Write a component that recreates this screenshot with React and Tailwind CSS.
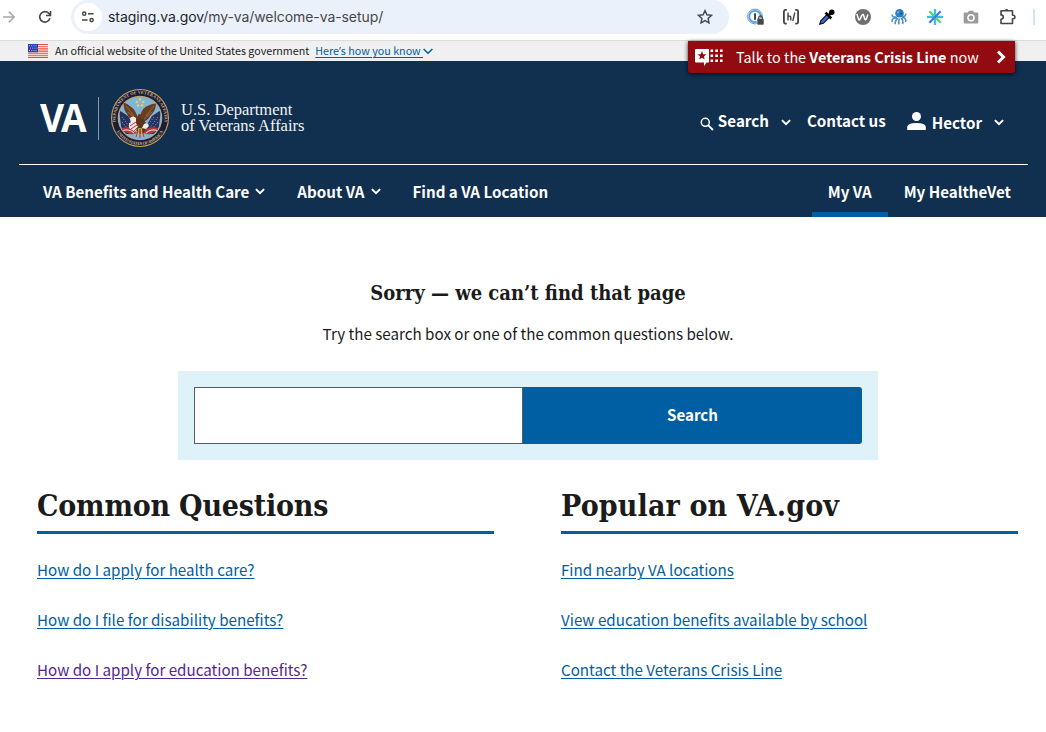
import React from "react";

const SANS = "font-['Noto_Sans_CJK_SC',sans-serif]";
const SLAB = "font-['DejaVu_Serif_Condensed','DejaVu_Serif',serif]";

function Chevron({ className = "" }) {
  return (
    <svg viewBox="0 0 10 7" fill="none" stroke="currentColor" strokeWidth="2" className={`h-[7px] w-[10px] shrink-0 ${className}`}>
      <path d="M0.9 1.1 5 5.1 9.1 1.1" />
    </svg>
  );
}

function Apostrophe() {
  return <span className="font-['Open_Sans',sans-serif] leading-none">’</span>;
}

function BrowserBar() {
  return (
    <div className="flex h-[41px] items-start border-b border-[#dcdcdc] bg-white">
      <svg viewBox="0 0 16 34" className="h-[34px] w-4 shrink-0" fill="none" stroke="#a8a8a8" strokeWidth="1.5">
        <path d="M3 17h11M8.8 11.6l5.4 5.4-5.4 5.4" />
      </svg>
      <svg viewBox="0 0 14 14" className="ml-[22px] mt-[10px] h-[14px] w-[14px] shrink-0" fill="none" stroke="#474747" strokeWidth="1.6">
        <path d="M11.9 8.3A5.2 5.2 0 1 1 10.8 3.4L12.6 5.2" />
        <path d="M12.5 1v4.5H8" />
      </svg>
      <div className="ml-[19px] flex h-[34px] w-[658px] shrink-0 items-center rounded-full bg-[#eaf1fb] pl-[3px] pr-4">
        <span className="flex h-7 w-7 items-center justify-center rounded-full bg-white">
          <svg viewBox="0 0 14 12" className="h-3 w-[14px]" fill="none" stroke="#474747" strokeWidth="1.5">
            <circle cx="3.2" cy="2.7" r="1.6" />
            <path d="M7 2.7h5.6M1 9.1h5.6" />
            <circle cx="10.6" cy="9.1" r="1.6" />
          </svg>
        </span>
        <span className="ml-[6px] whitespace-nowrap font-['Inter',sans-serif] text-[14px] leading-5 tracking-[-0.075px] text-[#474747]">
          <span className="text-[#1f1f1f]">staging.va.gov</span>/my-va/welcome-va-setup/
        </span>
        <svg viewBox="0 0 16 16" className="ml-auto h-4 w-4" fill="none" stroke="#474747" strokeWidth="1.4">
          <path d="M8 1.6l1.9 4.2 4.6.5-3.4 3.1.9 4.5L8 11.6l-4 2.3.9-4.5L1.5 6.3l4.6-.5z" />
        </svg>
      </div>
      <div className="flex h-[34px] flex-1 items-center pl-[18px]">
        <svg viewBox="0 0 18 18" className="h-[18px] w-[18px]" fill="none">
          <circle cx="8" cy="8.5" r="7.4" stroke="#8a8f96" strokeWidth="1" />
          <circle cx="8" cy="8.5" r="5.7" stroke="#3aa0f5" strokeWidth="1.7" fill="#fff" />
          <path d="M8 5.3v6.4" stroke="#333" strokeWidth="1.8" />
          <rect x="10" y="10.5" width="7" height="6.5" rx="1" fill="#474747" stroke="#fff" strokeWidth=".6" />
          <path d="M11.7 11V9.7a1.8 1.8 0 0 1 3.6 0V11" stroke="#474747" strokeWidth="1.2" />
        </svg>
        <svg viewBox="0 0 18 18" className="ml-[17px] h-[18px] w-[18px]" fill="none" stroke="#444" strokeWidth="1.8">
          <path d="M4.800 1.900H3.500Q1.900 1.900 1.900 4v9.500q0 2.100 1.600 2.100h1.300M13.200 1.900h1.300q1.600 0 1.600 2.100v9.500q0 2.100-1.600 2.100h-1.300" />
          <path d="M6 4.500v8M6 8.700q2.800-1.600 2.800 1v2.800M12.800 4.500l-2 8.500" strokeWidth="1.4" />
        </svg>
        <svg viewBox="0 0 16 16" className="ml-[19px] h-4 w-4">
          <path d="M.8 15.2l1-3.400 6.600-6.600 2.500 2.500-6.600 6.600z" fill="#3d6be0" stroke="#111" strokeWidth="1.200" />
          <path d="M6.5 3.600l5.900 5.900M8.800 7.200l4.200-4.200" stroke="#000" strokeWidth="2.600" />
          <circle cx="12.800" cy="3.200" r="2.700" fill="#000" />
        </svg>
        <svg viewBox="0 0 18 18" className="ml-[19px] h-[18px] w-[18px]" fill="none">
          <circle cx="9" cy="9" r="8" fill="#6f6f6f" />
          <path d="M2.800 6l1.800 5.300q.6 1.200 1.300 0L8 7.200q1-1.400 1.600 0l1.200 4q.7 1.300 1.400 0l1.700-4.800" stroke="#fff" strokeWidth="1.500" />
        </svg>
        <svg viewBox="0 0 18 18" className="ml-[18px] h-[18px] w-[18px]" fill="none" stroke="#4b93c6" strokeWidth="1.600">
          <path d="M6.500 9Q2 9.500 2 6.500M7 10q-5.500-.5-5 4M8 10.500q-3 1.500-2.800 5.800M9.500 10.500q-1.500 3-.5 6M11 10q2.500 2 1.700 6M12 9.500q4.300 0 3.800 4.500M12 8.500q3.800.5 3.800-3" />
          <circle cx="9.500" cy="5.300" r="4.300" fill="#2b7fc4" stroke="none" />
          <circle cx="8" cy="4.300" r="1" fill="#6fc0ea" stroke="none" />
          <circle cx="11.300" cy="5.500" r=".9" fill="#0f3d70" stroke="none" />
        </svg>
        <svg viewBox="0 0 18 18" className="ml-[18px] h-[18px] w-[18px]" fill="none" strokeWidth="2.300">
          <path d="M9 1v16" stroke="#31c8e8" />
          <path d="M1 9h16" stroke="#26c6dc" />
          <path d="M3.300 3.300l11.400 11.400" stroke="#4be05c" />
          <path d="M14.700 3.300L3.300 14.700" stroke="#4a74f5" />
        </svg>
        <svg viewBox="0 0 16 16" className="ml-[19px] h-4 w-4" fill="#9b9b9b">
          <path d="M1.700 3.500H4.800L6 1.700h4l1.200 1.800h3.100q1 0 1 1V13.500q0 1-1 1H1.700q-1 0-1-1V4.500q0-1 1-1z" />
          <circle cx="8" cy="8.800" r="3.800" fill="#fff" />
          <circle cx="8" cy="8.800" r="2.200" />
        </svg>
        <svg viewBox="0 0 18 18" className="ml-5 h-[18px] w-[18px]" fill="none" stroke="#474747" strokeWidth="1.600">
          <path d="M2 2.800h11.500v4.500h.7a1.700 1.700 0 0 1 0 3.400h-.7v4.800H2v-4.200q2.300-.2 2.300-2.200T2 6.900z" strokeLinejoin="round" />
          <path d="M6 2.300q0-1.300 1.600-1.300t1.600 1.300z" fill="#474747" stroke="none" />
        </svg>
        <span className="ml-4 h-4 w-[2px] bg-[#d2e3fc]" />
      </div>
    </div>
  );
}

function Flag() {
  return (
    <svg viewBox="0 0 20 14" className="h-[14px] w-5 shrink-0">
      <path fill="#fff" d="M0 0h20v14H0z" />
      <path stroke="#e8483f" strokeWidth="1.100" d="M0 .5h20M0 2.700h20M0 4.900h20M0 7.100h20M0 9.200h20M0 11.300h20M0 13.400h20" />
      <path fill="#2a3fae" d="M0 0h10v8.300H0z" />
      <path stroke="#c5cdf3" strokeWidth=".9" strokeDasharray="1 1.200" d="M1 1.700h8.500M2 4.100h7.500M1 6.500h8.500" />
    </svg>
  );
}

function GovBanner() {
  return (
    <div className="flex h-5 justify-between bg-[#f0f0f0]">
      <div className="flex items-center whitespace-nowrap pl-7 text-[10.72px] leading-5 text-[#1b1b1b]">
        <Flag />
        <span className="ml-[7px]">An official website of the United States government</span>
        <a className="ml-[6px] flex items-center text-[#005ea2]">
          <span className="underline decoration-1 underline-offset-[1.5px]">
            Here<Apostrophe />s how you know&nbsp;
          </span>
          <svg viewBox="0 0 10 7" fill="none" stroke="currentColor" strokeWidth="1.5" className="h-[7px] w-[10px]">
            <path d="M.6 1 5 5.300 9.400 1" />
          </svg>
        </a>
      </div>
      <a className="z-10 mr-[31px] flex h-8 w-[327px] shrink-0 items-center whitespace-nowrap rounded-b-[3px] bg-[#920b10] pl-[7px] text-[14.4px] leading-6 text-white shadow-[0_1px_4px_rgba(0,0,0,0.8)]">
        <svg viewBox="0 0 29 18" className="h-[18px] w-[29px]" fill="#fff">
          <path d="M1 1h13v13.500h-2.500L9 18.200V14.500H1q-1 0-1-1V2q0-1 1-1z" />
          <path fill="#920b10" d="M7 3l1.200 3.200 3.300.1-2.600 2.100.9 3.200L7 9.800l-2.800 1.800.9-3.200-2.600-2.100 3.300-.1z" />
          <path d="M15.500 1.500h2.600v2.600h-2.600zM20.300 1.500h2.600v2.600h-2.600zM25 1.500h2.600v2.600H25zM15.500 6.500h2.600v2.600h-2.600zM20.300 6.500h2.600v2.600h-2.600zM25 6.500h2.600v2.600H25zM15.500 11.500h2.600v2.600h-2.600zM20.300 11.500h2.600v2.600h-2.600zM25 11.500h2.600v2.600H25z" />
        </svg>
        <span className="ml-[12px] whitespace-pre">
          Talk to the <b className="font-bold">Veterans Crisis Line</b> now
        </span>
        <svg viewBox="0 0 10 14" className="ml-[17px] h-[14px] w-[10px]" fill="none" stroke="#fff" strokeWidth="3">
          <path d="M2 1.500 7.500 7 2 12.500" />
        </svg>
      </a>
    </div>
  );
}

function Seal() {
  return (
    <svg viewBox="0 0 60 60" className="h-[60px] w-[60px] shrink-0">
      <defs>
        <path id="ring-top" d="M6.200 35.500A24.400 24.400 0 1 1 53.800 35.500" />
        <path id="ring-bottom" d="M4 37A26.900 26.900 0 0 0 56 37" />
        <clipPath id="disc">
          <circle cx="30" cy="30" r="21" />
        </clipPath>
      </defs>
      <circle cx="30" cy="30" r="29" fill="#c9a35a" />
      <circle cx="30" cy="30" r="27.900" fill="#1c1c3c" />
      <circle cx="30" cy="30" r="22.300" fill="#c9a35a" />
      <circle cx="30" cy="30" r="21.500" fill="#7fb6d3" />
      <text fill="#c8b284" className="font-['Liberation_Serif',serif] text-[4.400px] font-bold">
        <textPath href="#ring-top" startOffset="50%" textAnchor="middle" textLength="84">DEPARTMENT OF VETERANS AFFAIRS</textPath>
      </text>
      <text fill="#c8b284" className="font-['Liberation_Serif',serif] text-[4.400px] font-bold">
        <textPath href="#ring-bottom" startOffset="50%" textAnchor="middle" textLength="56">UNITED STATES OF AMERICA</textPath>
      </text>
      <g clipPath="url(#disc)">
        <path fill="#26335f" d="M9 22l9 6 7 12-3 6H12zM51 22l-9 6-7 12 3 6h10z" />
        <path stroke="#c5cbe0" strokeWidth=".8" strokeDasharray=".9 1.800" fill="none" d="M12 29l9 12M12 34l7 8M48 29l-9 12M48 34l-7 8M44 29l-6 8" />
        <path fill="#b5383f" d="M12 40q7-2 12 1l3 4-6 1.500-9-4zM48 40q-7-2-12 1l-3 4 6 1.500 9-4z" />
        <path stroke="#efe4e4" strokeWidth="1" fill="none" d="M13 42.500q6-2 11 2.500M47 42.500q-6-2-11 2.500" />
      </g>
      <path fill="#6a3d22" d="M13.500 14.500q0 8 4 12 2 6 8 7l3.500 3 3-3q5.500 0 8.500-6 5.500-5 5.500-12-4 0-7.500 2-6 2-8 9-2-2-3 2-3-8-7-10-3-3-7-4z" />
      <path stroke="#a86f42" strokeWidth=".8" fill="none" d="M16 18l8 10M18 24l8 7M44 18l-8 10M42 24l-8 7" />
      <path fill="#5c3420" d="M26 32l3-3 5 3 4 6-5 8-5-1-3-5z" />
      <path fill="#f3ece4" d="M20 30q3-3 6 0v5l-5 1zM34 36q4-2 5 2l-3 3-4-1z" />
      <path fill="#e8e3e2" d="M19 35l6-2 3 6-3 5-6-4z" />
      <path stroke="#c23b42" strokeWidth="1" d="M20 38l6-4M21 41l6-4M24 43l4-4" />
      <path stroke="#d7b64e" strokeWidth="1.500" d="M28 48l1-8M32 48l-1-8" />
      <path stroke="#b5383f" strokeWidth="1" d="M30 50v-9M26 49l2-6M34 49l-2-6" />
      <g fill="#eed35c">
        <circle cx="30" cy="11.500" r="1.200" />
        <circle cx="26.700" cy="14" r="1.200" />
        <circle cx="33.300" cy="14" r="1.200" />
        <circle cx="28" cy="17.500" r="1.200" />
        <circle cx="32" cy="17.500" r="1.200" />
      </g>
    </svg>
  );
}

function Header() {
  return (
    <header className="h-[156px] bg-[#112f4e] pl-[19px] pr-[18px] text-[15.15px] font-bold leading-6 text-white">
      <div className="flex h-[104px] items-start justify-between border-b border-white pl-[21px] pr-[24px]">
        <div className="flex h-[114px] items-center">
          <span className="w-[47px] origin-left scale-x-[0.93] pb-[3px] font-['Open_Sans',sans-serif] text-[40px] leading-[40px] tracking-[-3.3px]">VA</span>
          <span className="ml-[11px] h-[43px] w-px bg-[#8796a8]" />
          <span className="ml-[11px] flex">
            <Seal />
          </span>
          <span className="ml-[11px] whitespace-nowrap font-['Liberation_Serif',serif] text-[16.5px] font-normal leading-4 text-[#f2f4f6]">
            <span className="block">U.S. Department</span>
            <span className="block tracking-[-0.04px]">of Veterans Affairs</span>
          </span>
        </div>
        <div className="flex items-start whitespace-nowrap pt-[47px]">
          <svg viewBox="0 0 14 14" className="mt-[9px] h-[14px] w-[14px]" fill="none" stroke="#fff">
            <circle cx="5.300" cy="5.300" r="4" strokeWidth="1.500" />
            <path d="M8.300 8.300l4.700 4.700" strokeWidth="1.900" />
          </svg>
          <span className="ml-[4px]">Search</span>
          <Chevron className="ml-[12px] mt-[11px]" />
          <span className="ml-[16px]">Contact us</span>
          <svg viewBox="0 0 19 18" className="ml-[21px] mt-[4px] h-[18px] w-[19px]" fill="#fff">
            <circle cx="9.500" cy="4.500" r="4.500" />
            <path d="M.2 18v-3.200Q.5 11 9.500 11t9.300 3.800V18z" />
          </svg>
          <span className="ml-[6px] mt-[2px]">Hector</span>
          <Chevron className="ml-[12px] mt-[11px]" />
        </div>
      </div>
      <nav className="flex h-[52px] items-stretch whitespace-nowrap pl-[24px]">
        <span className="flex items-center">
          VA Benefits and Health Care <Chevron className="ml-[6px]" />
        </span>
        <span className="ml-[32px] flex items-center">
          About VA <Chevron className="ml-[6px]" />
        </span>
        <span className="ml-[32px] flex items-center">Find a VA Location</span>
        <span className="ml-auto flex w-[76px] items-center justify-center border-b-[5px] border-[#005ea2] pt-[5px]">My VA</span>
        <span className="ml-[16px] mr-[17px] flex items-center">My HealtheVet</span>
      </nav>
    </header>
  );
}

function LinkColumn({ title, links, titleClass }) {
  return (
    <section className="w-[457px]">
      <h2 className={`${SLAB} h-[49px] whitespace-nowrap border-b-[3px] border-[#005ea2] pt-px text-[30px] font-bold leading-[40px] text-[#1b1b1b] ${titleClass}`}>{title}</h2>
      <ul className="mt-[23px] flex flex-col gap-[26px]">
        {links.map(([text, color]) => (
          <li key={text} className="h-6">
            <a className={`whitespace-nowrap underline decoration-1 underline-offset-[1.5px] ${color}`}>{text}</a>
          </li>
        ))}
      </ul>
    </section>
  );
}

const LINK = "text-[#005ea2]";

export default function App() {
  return (
    <div className={`${SANS} h-[732px] w-[1046px] overflow-hidden bg-white`}>
      <BrowserBar />
      <GovBanner />
      <Header />
      <main className="text-[15.16px] leading-6 text-[#1b1b1b]">
        <div className="flex flex-col items-center pl-[10px] pt-[63px]">
          <h1 className={`${SLAB} whitespace-nowrap text-[20px] font-bold leading-[26px]`}>Sorry — we can’t find that page</h1>
          <p className="mt-[15px] whitespace-nowrap text-[15.18px]">Try the search box or one of the common questions below.</p>
          <form className="mt-[26px] flex h-[89px] w-[700px] bg-[#dff2f9] p-4">
            <input className="w-[329px] border border-[#565c65] bg-white outline-none" />
            <button type="button" className="h-[57px] w-[339px] rounded-r-[3px] bg-[#005ea2] pb-[3px] font-bold text-white">
              Search
            </button>
          </form>
        </div>
        <div className="flex justify-between pl-[37px] pr-[28px] pt-[25px]">
          <LinkColumn
            title="Common Questions"
            titleClass="tracking-[-0.22px]"
            links={[
              ["How do I apply for health care?", LINK],
              ["How do I file for disability benefits?", LINK],
              ["How do I apply for education benefits?", "text-[#54278f]"],
            ]}
          />
          <LinkColumn
            title="Popular on VA.gov"
            titleClass="tracking-[0.13px]"
            links={[
              ["Find nearby VA locations", LINK],
              ["View education benefits available by school", LINK],
              ["Contact the Veterans Crisis Line", LINK],
            ]}
          />
        </div>
      </main>
    </div>
  );
}
